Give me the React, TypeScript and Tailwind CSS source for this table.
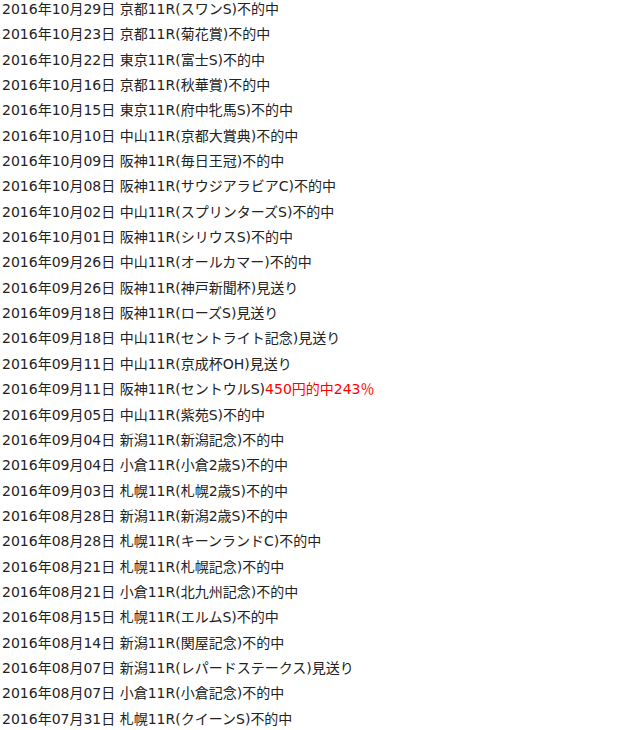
const rows: [string, string][] = [
  ["2016年10月29日 京都11R(スワンS)", "不的中"],
  ["2016年10月23日 京都11R(菊花賞)", "不的中"],
  ["2016年10月22日 東京11R(富士S)", "不的中"],
  ["2016年10月16日 京都11R(秋華賞)", "不的中"],
  ["2016年10月15日 東京11R(府中牝馬S)", "不的中"],
  ["2016年10月10日 中山11R(京都大賞典)", "不的中"],
  ["2016年10月09日 阪神11R(毎日王冠)", "不的中"],
  ["2016年10月08日 阪神11R(サウジアラビアC)", "不的中"],
  ["2016年10月02日 中山11R(スプリンターズS)", "不的中"],
  ["2016年10月01日 阪神11R(シリウスS)", "不的中"],
  ["2016年09月26日 中山11R(オールカマー)", "不的中"],
  ["2016年09月26日 阪神11R(神戸新聞杯)", "見送り"],
  ["2016年09月18日 阪神11R(ローズS)", "見送り"],
  ["2016年09月18日 中山11R(セントライト記念)", "見送り"],
  ["2016年09月11日 中山11R(京成杯OH)", "見送り"],
  ["2016年09月11日 阪神11R(セントウルS)", "HIT"],
  ["2016年09月05日 中山11R(紫苑S)", "不的中"],
  ["2016年09月04日 新潟11R(新潟記念)", "不的中"],
  ["2016年09月04日 小倉11R(小倉2歳S)", "不的中"],
  ["2016年09月03日 札幌11R(札幌2歳S)", "不的中"],
  ["2016年08月28日 新潟11R(新潟2歳S)", "不的中"],
  ["2016年08月28日 札幌11R(キーンランドC)", "不的中"],
  ["2016年08月21日 札幌11R(札幌記念)", "不的中"],
  ["2016年08月21日 小倉11R(北九州記念)", "不的中"],
  ["2016年08月15日 札幌11R(エルムS)", "不的中"],
  ["2016年08月14日 新潟11R(関屋記念)", "不的中"],
  ["2016年08月07日 新潟11R(レパードステークス)", "見送り"],
  ["2016年08月07日 小倉11R(小倉記念)", "不的中"],
  ["2016年07月31日 札幌11R(クイーンS)", "不的中"],
];

export default function App() {
  return (
    <div className="bg-white w-[640px] h-[730px] overflow-hidden pl-[2px] text-[14px] text-[#222] font-['DejaVu_Sans','Noto_Sans_CJK_JP',sans-serif]">
      {rows.map(([race, result], i) => (
        <div key={i} className="whitespace-nowrap leading-[18px] pb-[7.35px]">
          {race}
          {result === "HIT" ? (
            <span className="text-[#ff0000]">450円的中243％</span>
          ) : (
            result
          )}
        </div>
      ))}
    </div>
  );
}
